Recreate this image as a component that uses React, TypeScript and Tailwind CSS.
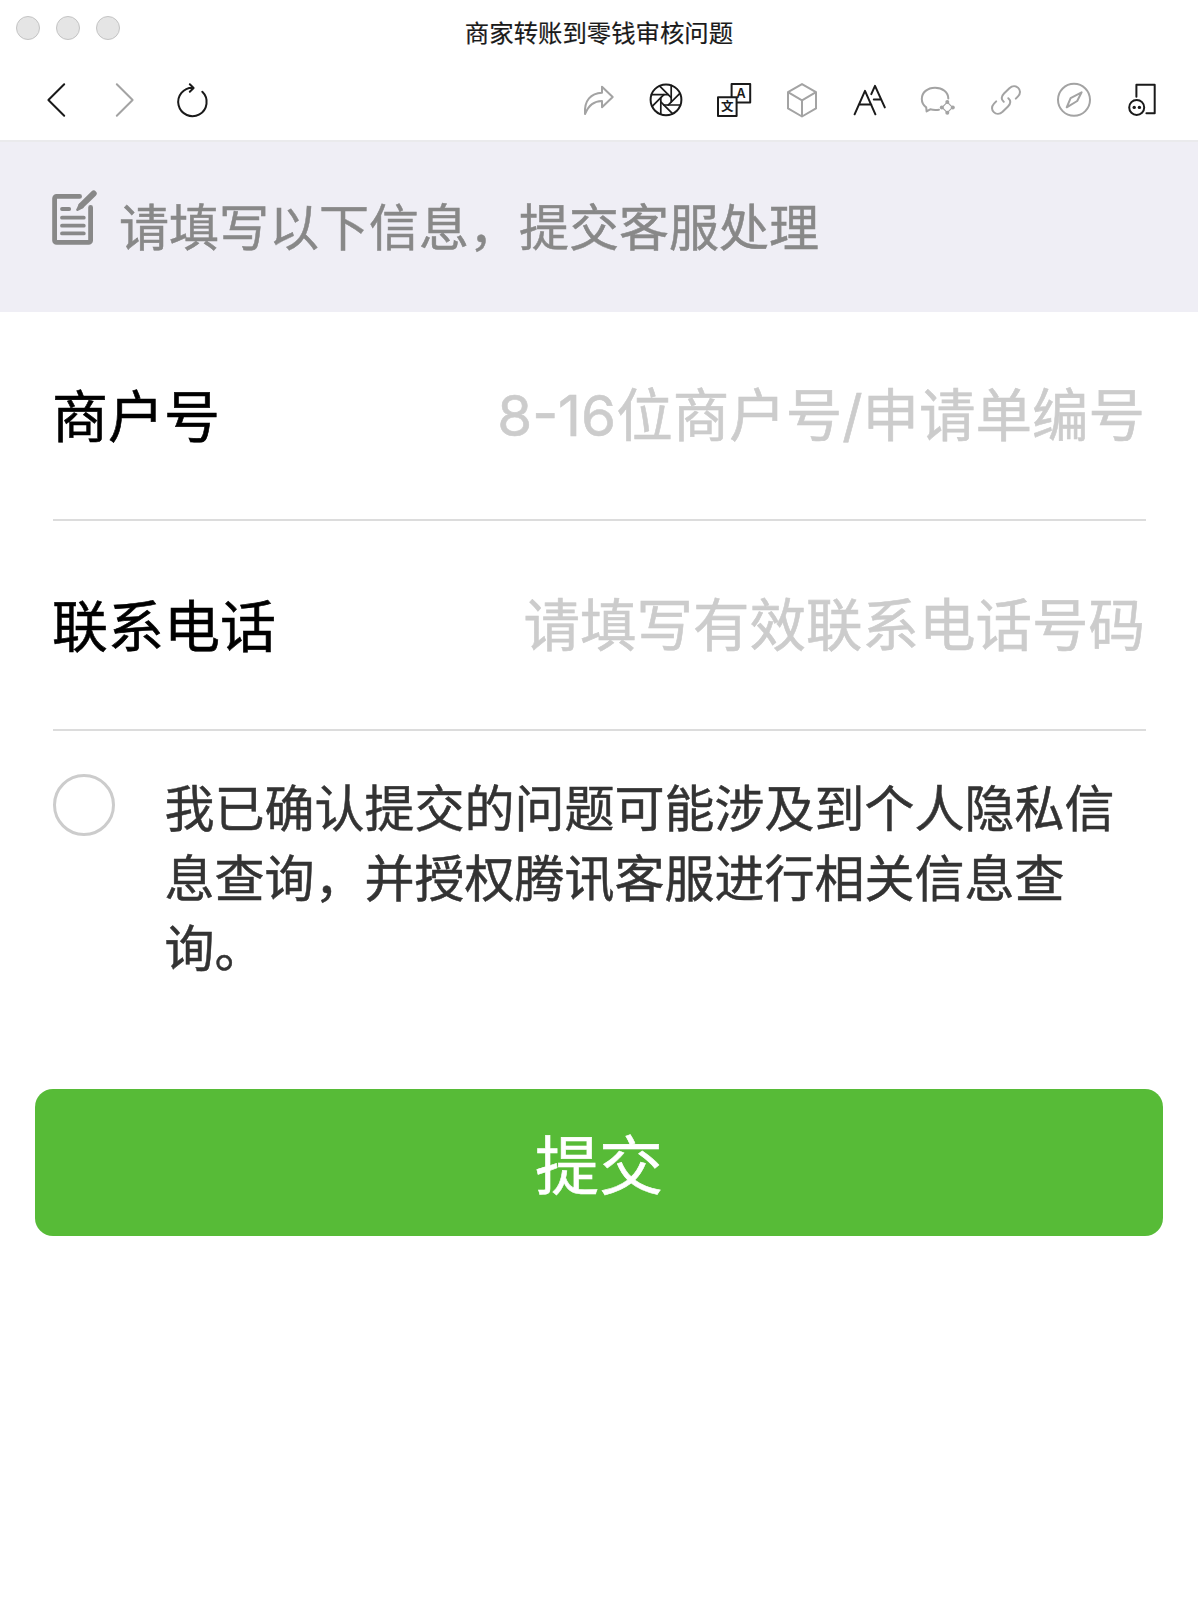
import type { ReactNode } from "react";

type IconProps = {
  muted?: boolean;
  children: ReactNode;
};

function Icon({ muted, children }: IconProps) {
  return (
    <svg
      viewBox="0 0 40 40"
      className={muted ? "size-10 shrink-0 text-[#a3a3a3]" : "size-10 shrink-0 text-[#1a1a1a]"}
      fill="none"
      stroke="currentColor"
      strokeWidth="2"
      strokeLinecap="round"
      strokeLinejoin="round"
    >
      {children}
    </svg>
  );
}

const bladeAngles = [0, 45, 90, 135, 180, 225, 270, 315];

function TitleBar() {
  return (
    <div className="grid h-[60px] grid-cols-[1fr_auto_1fr] px-4">
      <div className="flex gap-4 pt-4">
        <span className="size-6 rounded-full border border-[#c4c4c4] bg-[#e5e5e5]" />
        <span className="size-6 rounded-full border border-[#c4c4c4] bg-[#e5e5e5]" />
        <span className="size-6 rounded-full border border-[#c4c4c4] bg-[#e5e5e5]" />
      </div>
      <h1 className="pt-[15px] text-[24.4px] leading-9 text-[#1a1a1a] [-webkit-text-stroke:0.2px]">
        商家转账到零钱审核问题
      </h1>
    </div>
  );
}

function Toolbar() {
  return (
    <div className="flex h-20 items-center justify-between px-9">
      <div className="flex gap-7">
        <Icon>
          <path d="M28.2 4.2 12.4 20l15.8 15.8" />
        </Icon>
        <Icon muted>
          <path d="M12.8 4.2 28.6 20 12.8 35.8" />
        </Icon>
        <Icon>
          <path d="M30.3 11.8A14.2 14.2 0 1 1 21 7.8M17.8 4.3 21.6 8l-3.8 3.7" />
        </Icon>
      </div>
      <div className="flex gap-7">
        <Icon muted>
          <path d="M24 12.7C13 13.3 6 20 7 34c4-9.5 9-12.6 17-13v6.3L34.7 17 24 6.7z" />
        </Icon>
        <Icon>
          <circle cx="20" cy="19.8" r="15.4" />
          {bladeAngles.map((angle) => (
            <path key={angle} d="M5.6 14.6h16.6" strokeWidth="1.7" transform={`rotate(${angle} 20 19.8)`} />
          ))}
        </Icon>
        <Icon>
          <path d="M17.6 17V3.9h18.6v18.6H23" />
          <path d="M4 17.3h18.6v18.6H4z" />
          <text x="27" y="18" textAnchor="middle" fontSize="13" fontWeight="600" fill="currentColor" stroke="none">
            A
          </text>
          <text x="13.2" y="31.4" textAnchor="middle" fontSize="12.5" fontWeight="700" fill="currentColor" stroke="none">
            文
          </text>
        </Icon>
        <Icon muted>
          <path d="M20 4.1 34 12.2v16.2l-14 8.1-14-8.1V12.2zM6 12.2l14 8.1 14-8.1M20 20.3v16.2" />
        </Icon>
        <Icon>
          <path d="M4.6 34.3 15 10.8l10.4 23.5M8.8 24.4h12.5M21.3 14.2 25 5.8l9.8 21.6M23.8 19.4h6.6" />
        </Icon>
        <Icon muted>
          <path d="M30.3 18.5C30.3 12 24.5 7.7 17 7.7S3.8 12.4 3.8 19c0 3.4 1.6 6.3 4.4 8.4l.4 4 3.6-2.1c2.8.8 6 .9 8.8.4" />
          <path d="m29.3 22.2 5.2 5.2-5.2 5.2-5.2-5.2z" strokeWidth="1.2" />
          <g fill="currentColor" stroke="none">
            <circle cx="29.3" cy="22" r="2" />
            <circle cx="34.8" cy="27.4" r="2" />
            <circle cx="29.3" cy="32.8" r="2" />
            <circle cx="23.8" cy="27.4" r="2" />
          </g>
        </Icon>
        <Icon muted>
          <path d="m29.8 18.6 2.2-2.2c5.8-6-2.4-14-8.6-8.2L18 13.5c-3 3-3 6-.3 8.3" />
          <path d="m10.2 21.4-2.2 2.2c-5.8 6 2.4 14 8.6 8.2l5.4-5.3c3-3 3-6 .3-8.3" />
        </Icon>
        <Icon muted>
          <circle cx="20" cy="19.8" r="16" />
          <path d="M27.6 12.3 23.2 21l-10.5 6.3 3.9-9.2z" />
        </Icon>
        <Icon>
          <path d="M14.4 16.8V4.8h18.3v28.4h-8.3" />
          <circle cx="14.7" cy="27.4" r="7.5" />
          <g fill="currentColor" stroke="none">
            <circle cx="12.2" cy="27.4" r="1.7" />
            <circle cx="17.4" cy="27.4" r="1.7" />
          </g>
        </Icon>
      </div>
    </div>
  );
}

function FormNotice() {
  return (
    <div className="flex h-[172px] border-t-2 border-t-[#eaeaec] bg-[#efeef5] pl-[52px] text-[#888]">
      <svg viewBox="0 0 46 56" className="mt-12 h-14 w-[46px] shrink-0" fill="none" stroke="currentColor" strokeLinecap="round">
        <path d="M27.6 6.4h-23a2 2 0 0 0-2 2v42a2 2 0 0 0 2 2h32a2 2 0 0 0 2-2V17.5" strokeWidth="4.8" />
        <path d="M10 19h7.2M10 27.7h21.8M10 35.7h21.8M10 43.4h21.8" strokeWidth="3.8" />
        <path d="M41.7 3.5 29.5 15.3" strokeWidth="6" />
        <path d="m27.2 13.2 4.7 4.6-6.2 3.1q-1.7.4-1.5-1.4z" fill="currentColor" stroke="none" />
      </svg>
      <p className="mt-[51px] ml-[21px] text-[50px] leading-[70px] [-webkit-text-stroke:0.5px]">
        请填写以下信息，提交客服处理
      </p>
    </div>
  );
}

type FieldProps = {
  label: string;
  placeholder: string;
};

function Field({ label, placeholder }: FieldProps) {
  return (
    <label className="flex h-[210px] items-center border-b-2 border-[#dcdcdc]">
      <span className="-ml-px shrink-0 pt-1 text-[56px] text-black [-webkit-text-stroke:0.6px]">{label}</span>
      <input
        type="text"
        placeholder={placeholder}
        className="min-w-0 flex-1 bg-transparent pt-[3px] pr-[1px] text-right text-[56.5px] outline-none [-webkit-text-stroke:0.6px] placeholder:text-[#ccc]"
      />
    </label>
  );
}

export default function App() {
  return (
    <div className="min-h-[1598px] w-full bg-white font-['Inter','Noto_Sans_CJK_SC',sans-serif]" lang="zh-CN">
      <TitleBar />
      <Toolbar />
      <FormNotice />
      <form className="-mt-px pb-10">
        <div className="pr-[52px] pl-[53px]">
          <Field label="商户号" placeholder="8-16位商户号/申请单编号" />
          <Field label="联系电话" placeholder="请填写有效联系电话号码" />
          <div className="flex pt-[43px]">
            <span className="size-[62px] shrink-0 rounded-full border-3 border-[#ccc]" />
            <p className="ml-[49.5px] w-[960px] text-[50px] leading-[70px] text-[#333] [-webkit-text-stroke:0.5px]">
              我已确认提交的问题可能涉及到个人隐私信息查询，并授权腾讯客服进行相关信息查询。
            </p>
          </div>
        </div>
        <div className="px-[35px] pt-[105px]">
          <button
            type="button"
            className="h-[147px] w-full rounded-[18px] bg-[#57bb37] pt-[7px] text-[64px] text-white [-webkit-text-stroke:0.6px]"
          >
            提交
          </button>
        </div>
      </form>
    </div>
  );
}
